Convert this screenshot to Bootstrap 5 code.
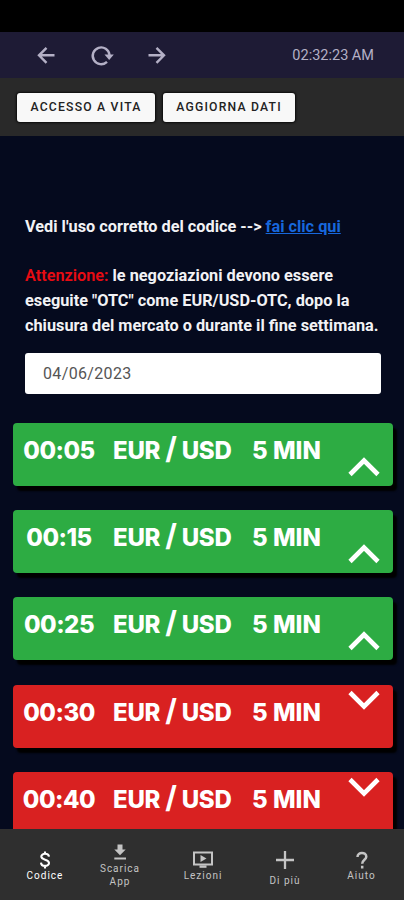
<!DOCTYPE html>
<html lang="it">
<head>
<meta charset="utf-8">
<meta name="viewport" content="width=device-width, initial-scale=1">
<title>Codice</title>
<link rel="stylesheet" href="https://cdn.jsdelivr.net/npm/bootstrap@5.3.0/dist/css/bootstrap.min.css">
<style>
body{font-family:Roboto,"Liberation Sans",sans-serif;background:#050a1e;height:900px;overflow:hidden}
.status-strip{height:32px;background:#000}
.top-bar{height:46px;background:#1e1b35;padding:0 30px 0 36px;color:#b4b0c6}
.top-bar svg{display:block}
.clock{font-size:14.5px;line-height:20px;padding-top:1px}
.tool-bar{height:58px;background:#292929;padding:15px 17px 0;gap:8px}
.btn-tool{height:29px;padding:0;border:0;border-radius:3px;background:#f8f8f8;color:#222;font-size:12.2px;font-weight:500;line-height:29px;letter-spacing:1.2px;box-shadow:0 0 2px 1px #0b0b0b}
.btn-tool:hover{background:#fff}
.w-a{width:138px}.w-b{width:132px}
.notice{padding:78px 0 0 25px;color:#f2f2f5;font-size:16.3px;line-height:25px;font-weight:700;white-space:nowrap}
.notice a{color:#1767dc}
.notice .warn{color:#e80b12;font-weight:600}
.date-box{margin:15px 23px 0 25px;height:41px;width:auto;border:0;border-radius:3px;padding:0 18px;background:#fff;color:#555;font-size:16px;line-height:41px;letter-spacing:.35px}
.signals{margin:29px 11px 0 13px;gap:24.2px}
.signal{height:63px;flex:none;border-radius:4px;color:#fff;box-shadow:4px 5px 2px #000;font-family:Inter,"Liberation Sans",sans-serif;font-size:24px;font-weight:800;line-height:30px;padding-top:13px;white-space:nowrap;letter-spacing:-.5px}
.up{background:#2dac43}.down{background:#d92121}
.s-time{width:92px;text-align:center}
.s-pair{width:139px;padding-left:8px;letter-spacing:-.25px}
.s-pair span{font-size:30px;line-height:0;font-weight:700}
.s-span{width:104px;padding-left:8px;letter-spacing:0}
.signal svg{width:32px;height:21px}
.up svg{margin-top:20px}.down svg{margin-top:-8px}
.bottom-nav{height:71px;background:#2f2f2f;color:#c4c4c4;font-size:10px;line-height:13px;letter-spacing:1px;z-index:5}
.bottom-nav a{color:inherit;text-decoration:none;text-align:center;flex:none}
.bottom-nav .now{color:#fff}
.bottom-nav svg{display:block;margin:0 auto}
.n1{width:90px;padding-top:22px}.n2{width:60px;padding-top:14px}.n3{width:106px;padding-top:22px}.n4{width:58px;padding-top:21px}.n5{width:90px;padding:22px 0 0 5px}
</style>
<script src="https://cdn.jsdelivr.net/npm/bootstrap@5.3.0/dist/js/bootstrap.bundle.min.js"></script>
</head>
<body>
<div class="status-strip"></div>
<header class="top-bar d-flex align-items-center">
<svg width="130" height="24" viewBox="0 0 130 24" fill="none" stroke="currentColor" stroke-width="2.4">
<path d="M18.500 12.300H3M10.500 4.800L3 12.300L10.500 19.800"/>
<path d="M71 18.800A8.400 8.400 0 1 1 73.500 12"/><path d="M68.500 11.500H77.800L73.200 17Z" fill="currentColor" stroke="none"/>
<path d="M112.500 12.300H128M120.500 4.800L128 12.300L120.500 19.800"/>
</svg>
<span class="clock ms-auto">02:32:23 AM</span>
</header>
<div class="tool-bar d-flex">
<button class="btn btn-tool w-a">ACCESSO A VITA</button>
<button class="btn btn-tool w-b">AGGIORNA DATI</button>
</div>
<main>
<div class="notice">
<div>Vedi l'uso corretto del codice --&gt; <a href="#">fai clic qui</a></div>
<div class="mt-4"><span class="warn">Attenzione:</span> le negoziazioni devono essere<br>eseguite "OTC" come EUR/USD-OTC, dopo la<br>chiusura del mercato o durante il fine settimana.</div>
</div>
<div class="date-box">04/06/2023</div>
<div class="signals d-flex flex-column">
<div class="signal up d-flex"><div class="s-time">00:05</div><div class="s-pair">EUR <span>/</span> USD</div><div class="s-span">5 MIN</div><svg viewBox="0 0 32 21" fill="none" stroke="#fff" stroke-width="4.6"><path d="M2 18.500L16 4.500L30 18.500"/></svg></div>
<div class="signal up d-flex"><div class="s-time">00:15</div><div class="s-pair">EUR <span>/</span> USD</div><div class="s-span">5 MIN</div><svg viewBox="0 0 32 21" fill="none" stroke="#fff" stroke-width="4.6"><path d="M2 18.500L16 4.500L30 18.500"/></svg></div>
<div class="signal up d-flex"><div class="s-time">00:25</div><div class="s-pair">EUR <span>/</span> USD</div><div class="s-span">5 MIN</div><svg viewBox="0 0 32 21" fill="none" stroke="#fff" stroke-width="4.6"><path d="M2 18.500L16 4.500L30 18.500"/></svg></div>
<div class="signal down d-flex"><div class="s-time">00:30</div><div class="s-pair">EUR <span>/</span> USD</div><div class="s-span">5 MIN</div><svg viewBox="0 0 32 21" fill="none" stroke="#fff" stroke-width="4.6"><path d="M2 2.500L16 16.500L30 2.500"/></svg></div>
<div class="signal down d-flex"><div class="s-time">00:40</div><div class="s-pair">EUR <span>/</span> USD</div><div class="s-span">5 MIN</div><svg viewBox="0 0 32 21" fill="none" stroke="#fff" stroke-width="4.6"><path d="M2 2.500L16 16.500L30 2.500"/></svg></div>
</div>
</main>
<nav class="bottom-nav fixed-bottom d-flex">
<a href="#" class="n1 now"><svg width="18" height="18" viewBox="0 0 18 18" fill="none" stroke="currentColor" stroke-width="2.1"><path d="M13 5.700C12.700 1.800 5.300 1.900 5.300 5.600C5.300 9.600 13 7.700 13 12C13 16 5.200 15.900 5 11.600M9 .5V3.500M9 14.500V17.500"/></svg>Codice</a>
<a href="#" class="n2"><svg width="18" height="19" viewBox="0 0 18 19" fill="currentColor"><path d="M6.500 1.500H11.500V6.500H14.700L9 12.300L3.300 6.500H6.500ZM3.300 14.500H15V16.500H3.300Z"/></svg>Scarica<br>App</a>
<a href="#" class="n3"><svg width="22" height="18" viewBox="0 0 22 18" fill="none" stroke="currentColor" stroke-width="2"><path d="M2 1.500H20V13.500H2Z"/><path d="M7.500 15.600H14.500" stroke-width="2.400"/><path d="M8.500 4L14.500 7.500L8.500 11Z" fill="currentColor" stroke="none"/></svg>Lezioni</a>
<a href="#" class="n4"><svg width="20" height="24" viewBox="0 0 20 24" fill="none" stroke="currentColor" stroke-width="2.300"><path d="M10 1V19M1 10H19"/></svg>Di più</a>
<a href="#" class="n5"><svg width="18" height="18" viewBox="0 0 18 18" fill="none" stroke="currentColor" stroke-width="2.500"><path d="M4.500 6C4.500 .6 13.300 .6 13.300 5.700C13.300 8.600 9.200 9 9.200 12.700M9.200 14.800V17.500"/></svg>Aiuto</a>
</nav>
</body>
</html>
